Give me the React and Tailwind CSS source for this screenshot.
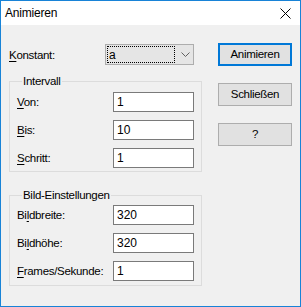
const font = { fontFamily: '"Liberation Sans", Arial, sans-serif' };

function Label({ u, rest, pre = '' }) {
  return (
    <span className="text-[11.5px] leading-[14px] tracking-[-0.3px] text-black">
      {pre}
      <span className="underline underline-offset-[2px] decoration-1">{u}</span>
      {rest}
    </span>
  );
}

function Field({ label, value, className = '' }) {
  return (
    <div className={`flex items-center justify-between ${className}`}>
      {label}
      <div className="w-[81px] h-[20px] border border-[#7a7a7a] bg-white flex items-center pl-[3px] text-[12px] text-black">
        {value}
      </div>
    </div>
  );
}

function Group({ title, children, className = '' }) {
  return (
    <fieldset className={`border border-[#dcdcdc] ml-[1px] w-[193px] h-[97px] px-[7px] ${className}`}>
      <legend className="ml-[5px] px-[1px] text-[11.5px] leading-[12px] tracking-[-0.3px] text-black">{title}</legend>
      {children}
    </fieldset>
  );
}

function Button({ children, focused }) {
  return (
    <div
      className={`w-[74px] h-[23px] bg-[#e1e1e1] flex items-center justify-center text-[11.5px] tracking-[-0.3px] text-black ${
        focused ? 'border-2 border-[#0078d7]' : 'border border-[#adadad]'
      }`}
    >
      {children}
    </div>
  );
}

export default function App() {
  return (
    <div style={font} className="w-[301px] h-[307px] border border-[#1883d7] bg-[#f0f0f0] flex flex-col">
      {/* title bar */}
      <div className="h-[24px] bg-white flex items-center justify-between pl-[4px] pr-[9px] shrink-0">
        <span className="text-[12px] tracking-[-0.2px] text-black">Animieren</span>
        <svg width="11" height="11" viewBox="0 0 11 11">
          <path d="M0.5 0.5 L10.5 10.5 M10.5 0.5 L0.5 10.5" stroke="#000" strokeWidth="1" />
        </svg>
      </div>

      <div className="flex pl-[7px]">
        {/* left column */}
        <div className="flex flex-col">
          <div className="flex items-center justify-between mt-[19px] w-[186px] pl-[1px]">
            <Label u="K" rest="onstant:" />
            <div className="w-[89px] h-[21px] border border-[#adadad] bg-[#e5e5e5] flex items-center pl-[1px]">
              <div className="w-[68px] h-[17px] border border-dotted border-black flex items-center pl-[1px] text-[12px] text-black">
                a
              </div>
              <svg width="9" height="5" viewBox="0 0 9 5" className="ml-[6px]">
                <path d="M0.5 0.5 L4.5 4.5 L8.5 0.5" stroke="#606060" strokeWidth="1" fill="none" />
              </svg>
            </div>
          </div>

          <Group title="Intervall" className="mt-[10px]">
            <Field className="mt-[5px]" label={<Label u="V" rest="on:" />} value="1" />
            <Field className="mt-[8px]" label={<Label u="B" rest="is:" />} value="10" />
            <Field className="mt-[8px]" label={<Label u="S" rest="chritt:" />} value="1" />
          </Group>

          <Group title="Bild-Einstellungen" className="mt-[17px]">
            <Field className="mt-[4px]" label={<Label pre="Bi" u="l" rest="dbreite:" />} value="320" />
            <Field className="mt-[8px]" label={<Label pre="Bi" u="l" rest="dhöhe:" />} value="320" />
            <Field className="mt-[8px]" label={<Label u="F" rest="rames/Sekunde:" />} value="1" />
          </Group>
        </div>

        {/* right column */}
        <div className="flex flex-col gap-[17px] ml-[16px] mt-[18px]">
          <Button focused>Animieren</Button>
          <Button>Schließen</Button>
          <Button>?</Button>
        </div>
      </div>
    </div>
  );
}
